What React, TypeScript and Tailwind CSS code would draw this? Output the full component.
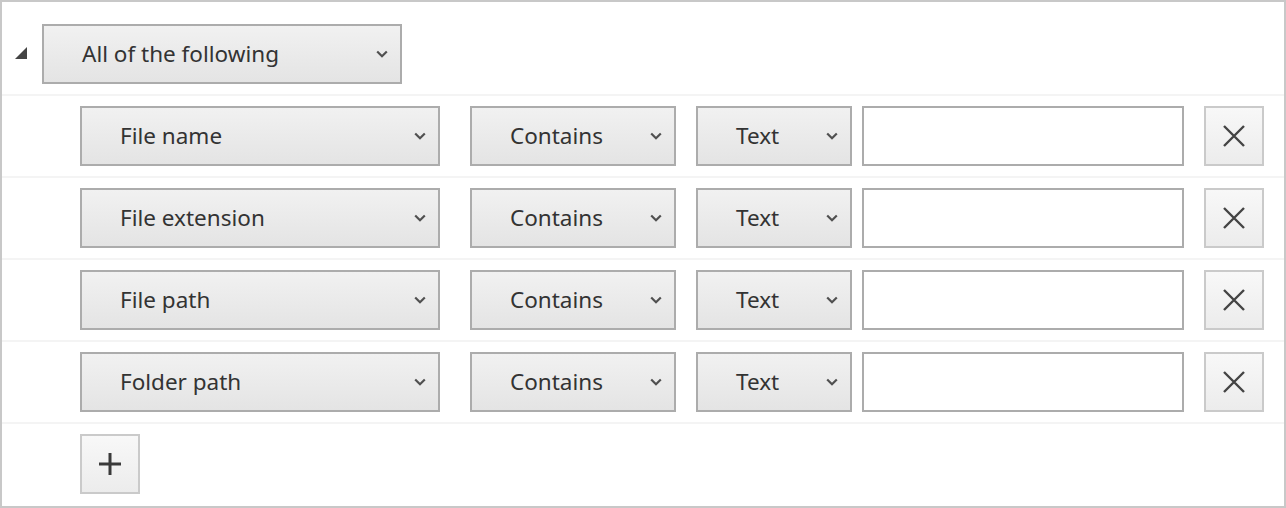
import React from "react";

const FONT = { fontFamily: '"Noto Sans", "Open Sans", sans-serif' };

function Chevron() {
  return (
    <svg width="12" height="8" viewBox="0 0 12 8" className="shrink-0">
      <path d="M1.2 1.5 L6 6.2 L10.8 1.5" fill="none" stroke="#505050" strokeWidth="2.2" />
    </svg>
  );
}

function Dropdown({ label, width }: { label: string; width: string }) {
  return (
    <div
      className={`${width} h-[60px] shrink-0 flex items-center justify-between border-2 border-[#acacac] bg-gradient-to-b from-[#f1f1f1] to-[#e4e4e4] pl-[38px] pr-[12px] text-[22.5px] text-[#333]`}
    >
      <span>{label}</span>
      <Chevron />
    </div>
  );
}

function IconButton({ children }: { children: React.ReactNode }) {
  return (
    <div className="w-[60px] h-[60px] shrink-0 flex items-center justify-center border-2 border-[#cacaca] bg-gradient-to-b from-[#f8f8f8] to-[#ececec]">
      {children}
    </div>
  );
}

const rows = ["File name", "File extension", "File path", "Folder path"];

export default function App() {
  return (
    <div className="w-[1286px] h-[508px] bg-white border-2 border-[#c8c8c8] overflow-hidden" style={FONT}>
      <div className="flex items-center pt-[22px] pb-[10px] pl-[13px]">
        <svg width="12" height="12" viewBox="0 0 12 12" className="mr-[15px] -mt-[2px]">
          <path d="M12 0 L12 12 L0 12 Z" fill="#444" />
        </svg>
        <Dropdown label="All of the following" width="w-[360px]" />
      </div>

      {rows.map((r) => (
        <div key={r} className="flex items-center border-t-2 border-[#f4f4f4] pt-[10px] pb-[10px] pl-[78px]">
          <Dropdown label={r} width="w-[360px]" />
          <div className="w-[30px]" />
          <Dropdown label="Contains" width="w-[206px]" />
          <div className="w-[20px]" />
          <Dropdown label="Text" width="w-[156px]" />
          <div className="w-[10px]" />
          <input className="w-[322px] h-[60px] shrink-0 border-2 border-[#acacac] bg-white outline-none" />
          <div className="w-[20px]" />
          <IconButton>
            <svg width="24" height="24" viewBox="0 0 24 24">
              <path d="M2 2 L22 22 M22 2 L2 22" stroke="#444" strokeWidth="2.4" fill="none" />
            </svg>
          </IconButton>
        </div>
      ))}

      <div className="border-t-2 border-[#f4f4f4] pt-[10px] pl-[78px]">
        <IconButton>
          <svg width="24" height="24" viewBox="0 0 24 24">
            <path d="M12 1 L12 23 M1 12 L23 12" stroke="#3a3a3a" strokeWidth="3" fill="none" />
          </svg>
        </IconButton>
      </div>
    </div>
  );
}
